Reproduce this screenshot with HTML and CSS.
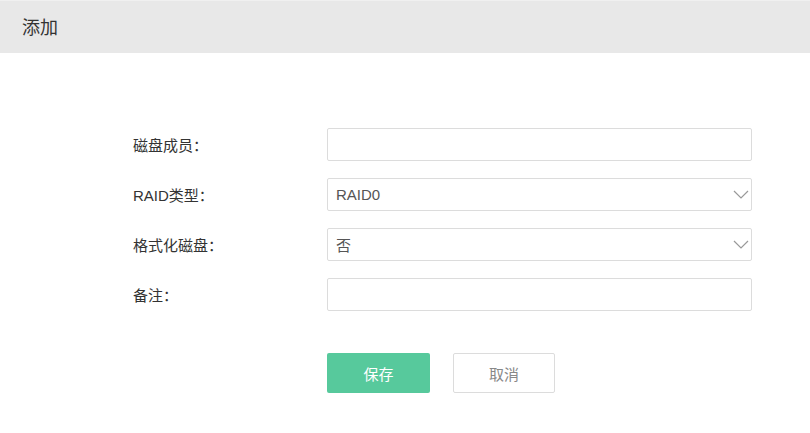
FILE: index.html
```html
<!DOCTYPE html>
<html>
<head>
    <meta charset="utf-8">
    <title>添加</title>
    <link rel="stylesheet" href="styles.css">
</head>
<body>
    <div class="header">
        <h1>添加</h1>
    </div>

    <form class="form">
        <div class="row">
            <label>磁盘成员：</label>
            <div class="field"></div>
        </div>
        <div class="row">
            <label>RAID类型：</label>
            <div class="field select">
                <span>RAID0</span>
                <svg class="arrow" width="16" height="9" viewBox="0 0 16 9"><path d="M1 1 L8 8 L15 1" fill="none" stroke="#999" stroke-width="1.2"/></svg>
            </div>
        </div>
        <div class="row">
            <label>格式化磁盘：</label>
            <div class="field select">
                <span>否</span>
                <svg class="arrow" width="16" height="9" viewBox="0 0 16 9"><path d="M1 1 L8 8 L15 1" fill="none" stroke="#999" stroke-width="1.2"/></svg>
            </div>
        </div>
        <div class="row">
            <label>备注：</label>
            <div class="field"></div>
        </div>

        <div class="buttons">
            <button type="button" class="btn-save">保存</button>
            <button type="button" class="btn-cancel">取消</button>
        </div>
    </form>
</body>
</html>
```

FILE: styles.css
```css
body {
    margin: 0;
    font-family: "Liberation Sans", "Noto Sans CJK SC", sans-serif;
    color: #333;
    background: #fff;
}

.header {
    height: 52px;
    background-color: #e8e8e8;
    border-top: 1px solid #f0f0f0;
    display: flex;
    align-items: center;
    padding-left: 22px;
}

.header h1 {
    margin: 0 0 2px;
    font-size: 18px;
    font-weight: normal;
    color: #333;
}

.form {
    padding: 75px 0 0 133px;
}

.row {
    display: flex;
    align-items: center;
    margin-bottom: 17px;
}

.row label {
    width: 194px;
    font-size: 15px;
    color: #333;
}

.field {
    width: 413px;
    height: 31px;
    border: 1px solid #dcdcdc;
    border-radius: 2px;
    display: flex;
    align-items: center;
    justify-content: space-between;
    padding: 0 2px 0 8px;
    font-size: 15px;
    color: #555;
}

.buttons {
    display: flex;
    gap: 23px;
    margin-top: 42px;
    padding-left: 194px;
}

.buttons button {
    height: 40px;
    font-family: inherit;
    font-size: 15px;
    border-radius: 2px;
    cursor: pointer;
}

.btn-save {
    width: 103px;
    border: none;
    background-color: #57c99c;
    color: #fff;
}

.btn-cancel {
    width: 102px;
    border: 1px solid #dcdcdc;
    background-color: #fff;
    color: #888;
}
```
